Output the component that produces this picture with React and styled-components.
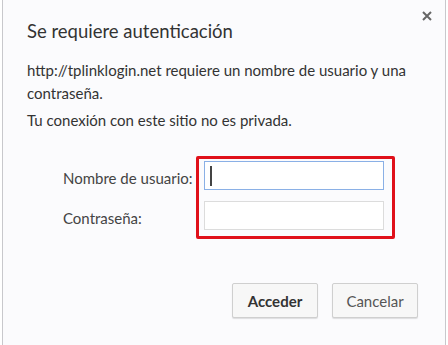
import React from "react";
import styled, { createGlobalStyle } from "styled-components";

const GlobalStyle = createGlobalStyle`
  html, body {
    margin: 0;
    padding: 0;
    background: #ffffff;
  }
  body {
    font-family: Lato, "Liberation Sans", Arial, sans-serif;
    color: #333;
  }
`;

const Dialog = styled.div`
  position: relative;
  box-sizing: border-box;
  margin-left: 2px;
  width: 444px;
  height: 345px;
  background: #fbfbfd;
  border-left: 1px solid #c8c8cc;
  border-right: 1px solid #c8c8cc;
  padding: 18px 0 0 24px;
`;

const Close = styled.button`
  position: absolute;
  top: 8px;
  right: 10px;
  width: 16px;
  height: 16px;
  padding: 0;
  border: 0;
  background: transparent;
  display: flex;
  align-items: center;
  justify-content: center;
`;

const Title = styled.h1`
  margin: 0 0 15px;
  font-size: 18.5px;
  font-weight: 400;
  line-height: 26px;
  color: #333;
`;

const Message = styled.p`
  margin: 0 0 4px;
  font-size: 15px;
  line-height: 23px;
  color: #333;
  width: 405px;
`;

const Form = styled.div`
  display: grid;
  grid-template-columns: 169px auto;
  align-items: start;
  margin-top: 24px;
`;

const Labels = styled.div`
  display: flex;
  flex-direction: column;
  gap: 11px;
  padding: 7px 0 0 36px;
`;

const Label = styled.label`
  height: 29px;
  display: flex;
  align-items: center;
  font-size: 15px;
  color: #444;
`;

const Highlight = styled.div`
  box-sizing: border-box;
  width: 199px;
  border: 3px solid #e0101a;
  border-radius: 2px;
  padding: 2px 8px 6px 5px;
  display: flex;
  flex-direction: column;
  gap: 11px;
`;

const Field = styled.div`
  box-sizing: border-box;
  width: 180px;
  height: 29px;
  background: #fff;
  border: 1px solid ${({ $focused }) => ($focused ? "#8ab0e6" : "#dcdcdc")};
  display: flex;
  align-items: center;
  padding-left: 5px;
`;

const Caret = styled.span`
  display: block;
  width: 2px;
  height: 20px;
  background: #444;
`;

const Footer = styled.div`
  display: flex;
  justify-content: flex-end;
  gap: 14px;
  margin-top: 44px;
  padding-right: 27px;
`;

const Button = styled.button`
  box-sizing: border-box;
  width: 86px;
  height: 35px;
  background: #f7f7f7;
  border: 1px solid #cfcfcf;
  border-radius: 2px;
  box-shadow: 0 1px 1px rgba(0, 0, 0, 0.12);
  font-family: Lato, "Liberation Sans", Arial, sans-serif;
  font-size: 15px;
  font-weight: ${({ $primary }) => ($primary ? 700 : 400)};
  color: ${({ $primary }) => ($primary ? "#333" : "#555")};
`;

const App = () => (
  <>
    <GlobalStyle />
    <Dialog>
      <Close aria-label="Cerrar">
        <svg width="10" height="10" viewBox="0 0 10 10">
          <path d="M1 1 L9 9 M9 1 L1 9" stroke="#666" strokeWidth="2" />
        </svg>
      </Close>
      <Title>Se requiere autenticación</Title>
      <Message>
        http://tplinklogin.net requiere un nombre de usuario y una contraseña.
      </Message>
      <Message>Tu conexión con este sitio no es privada.</Message>
      <Form>
        <Labels>
          <Label>Nombre de usuario:</Label>
          <Label>Contraseña:</Label>
        </Labels>
        <Highlight>
          <Field $focused>
            <Caret />
          </Field>
          <Field />
        </Highlight>
      </Form>
      <Footer>
        <Button $primary>Acceder</Button>
        <Button>Cancelar</Button>
      </Footer>
    </Dialog>
  </>
);

export default App;
